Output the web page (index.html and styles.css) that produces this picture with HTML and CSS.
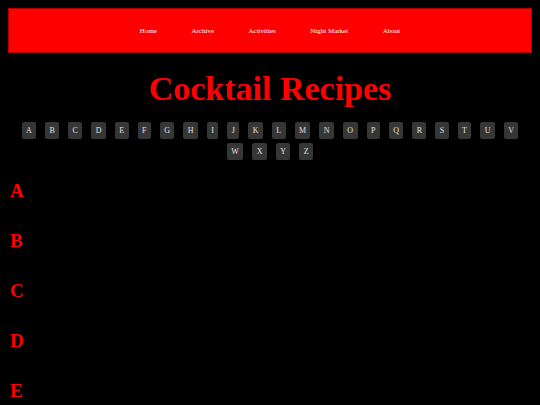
FILE: index.html
```html
<!DOCTYPE html>
<html lang="en">
<head>
<meta charset="utf-8">
<title>Cocktail Recipes</title>
<link rel="stylesheet" href="styles.css">
</head>
<body>
<header class="site-header">
  <nav class="nav">
    <a class="nav-link" href="#">Home</a>
    <a class="nav-link" href="#">Archive</a>
    <a class="nav-link" href="#">Activities</a>
    <a class="nav-link" href="#">Night Market</a>
    <a class="nav-link" href="#">About</a>
  </nav>
</header>
<h1 class="title">Cocktail Recipes</h1>
<div class="alphabet">
  <a class="letter" href="#A">A</a><a class="letter" href="#B">B</a><a class="letter" href="#C">C</a><a class="letter" href="#D">D</a><a class="letter" href="#E">E</a><a class="letter" href="#F">F</a><a class="letter" href="#G">G</a><a class="letter" href="#H">H</a><a class="letter" href="#I">I</a><a class="letter" href="#J">J</a><a class="letter" href="#K">K</a><a class="letter" href="#L">L</a><a class="letter" href="#M">M</a><a class="letter" href="#N">N</a><a class="letter" href="#O">O</a><a class="letter" href="#P">P</a><a class="letter" href="#Q">Q</a><a class="letter" href="#R">R</a><a class="letter" href="#S">S</a><a class="letter" href="#T">T</a><a class="letter" href="#U">U</a><a class="letter" href="#V">V</a><a class="letter" href="#W">W</a><a class="letter" href="#X">X</a><a class="letter" href="#Y">Y</a><a class="letter" href="#Z">Z</a>
</div>
<main class="sections">
  <section class="section" id="A"><h2 class="section-title">A</h2></section>
  <section class="section" id="B"><h2 class="section-title">B</h2></section>
  <section class="section" id="C"><h2 class="section-title">C</h2></section>
  <section class="section" id="D"><h2 class="section-title">D</h2></section>
  <section class="section" id="E"><h2 class="section-title">E</h2></section>
  <section class="section" id="F"><h2 class="section-title">F</h2></section>
</main>
</body>
</html>
```
FILE: styles.css
```css
html, body {
  background: #000;
}
body {
  margin: 8px;
  font-family: "Liberation Serif", "Times New Roman", serif;
  color: #fff;
}
.site-header {
  height: 43px;
  background: #ff0000;
  border: 1px solid #b00000;
  display: flex;
  align-items: center;
  justify-content: center;
}
.nav {
  display: flex;
  gap: 34.5px;
  align-items: center;
}
.nav-link {
  color: #fff;
  text-decoration: none;
  font-size: 7px;
  line-height: 8px;
}
.title {
  margin: 16px 0 0;
  font-size: 34px;
  line-height: 40px;
  font-weight: bold;
  color: #ff0000;
  text-align: center;
}
.alphabet {
  margin-top: 13px;
  display: flex;
  flex-wrap: wrap;
  justify-content: center;
  row-gap: 4px;
}
.letter {
  display: flex;
  align-items: center;
  justify-content: center;
  height: 17px;
  margin: 0 4.5px;
  padding: 0 4.4px;
  background: #363636;
  border-radius: 2px;
  color: #e0e0e0;
  font-size: 8px;
  text-decoration: none;
}
.sections {
  margin-top: 19px;
  padding-left: 2px;
}
.section {
  height: 50px;
}
.section-title {
  margin: 0;
  font-size: 19px;
  line-height: 24px;
  font-weight: bold;
  color: #ff0000;
}
```
